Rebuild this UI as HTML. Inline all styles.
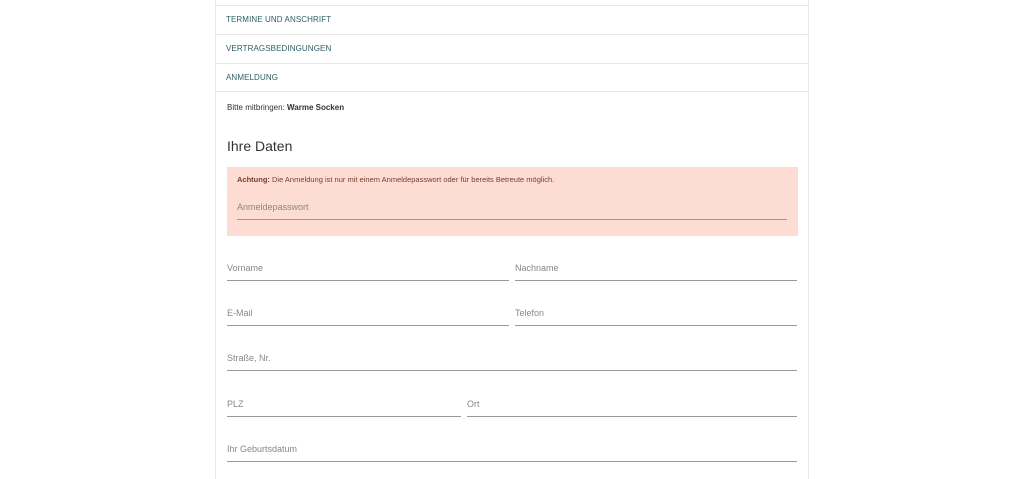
<!DOCTYPE html>
<html><head><meta charset="utf-8"><style>
body{margin:0;width:1024px;height:479px;background:#fff;font-family:"Liberation Sans",sans-serif;position:relative;overflow:hidden}
.c{position:absolute;left:215px;top:0;width:592px;height:479px;border-left:1px solid #e6e6e6;border-right:1px solid #e6e6e6}
.h{position:absolute;left:0;width:592px;border-top:1px solid #e6e6e6}
.t{position:absolute;left:10px;font-size:8px;color:#2d5f66;letter-spacing:.1px}
.a{position:absolute;font-size:9px;color:#888}
.l{position:absolute;border-top:1px solid #9a9a9a}
</style></head><body>
<div class="c">
<div class="h" style="top:5px"></div>
<div class="h" style="top:34px"></div>
<div class="h" style="top:63px"></div>
<div class="h" style="top:91px"></div>
<div class="t" style="top:15px">TERMINE UND ANSCHRIFT</div>
<div class="t" style="top:44px">VERTRAGSBEDINGUNGEN</div>
<div class="t" style="top:73px">ANMELDUNG</div>
<div style="position:absolute;left:11px;top:103px;font-size:8px;color:#333">Bitte mitbringen: <b>Warme Socken</b></div>
<div style="position:absolute;left:11px;top:138px;font-size:14px;color:#333">Ihre Daten</div>
<div style="position:absolute;left:11px;top:167px;width:571px;height:69px;background:#fddcd3">
<div style="position:absolute;left:10px;top:8px;font-size:7.5px;color:#7a3b30"><b>Achtung:</b> Die Anmeldung ist nur mit einem Anmeldepasswort oder für bereits Betreute möglich.</div>
<div class="a" style="left:10px;top:35px">Anmeldepasswort</div>
<div class="l" style="left:10px;top:52px;width:550px"></div>
</div>
</div>
<div class="a" style="left:227px;top:263px">Vorname</div><div class="l" style="left:227px;top:280px;width:282px"></div>
<div class="a" style="left:515px;top:263px">Nachname</div><div class="l" style="left:515px;top:280px;width:282px"></div>
<div class="a" style="left:227px;top:308px">E-Mail</div><div class="l" style="left:227px;top:325px;width:282px"></div>
<div class="a" style="left:515px;top:308px">Telefon</div><div class="l" style="left:515px;top:325px;width:282px"></div>
<div class="a" style="left:227px;top:353px">Straße, Nr.</div><div class="l" style="left:227px;top:370px;width:570px"></div>
<div class="a" style="left:227px;top:399px">PLZ</div><div class="l" style="left:227px;top:416px;width:234px"></div>
<div class="a" style="left:467px;top:399px">Ort</div><div class="l" style="left:467px;top:416px;width:330px"></div>
<div class="a" style="left:227px;top:444px">Ihr Geburtsdatum</div><div class="l" style="left:227px;top:461px;width:570px"></div>
</body></html>
